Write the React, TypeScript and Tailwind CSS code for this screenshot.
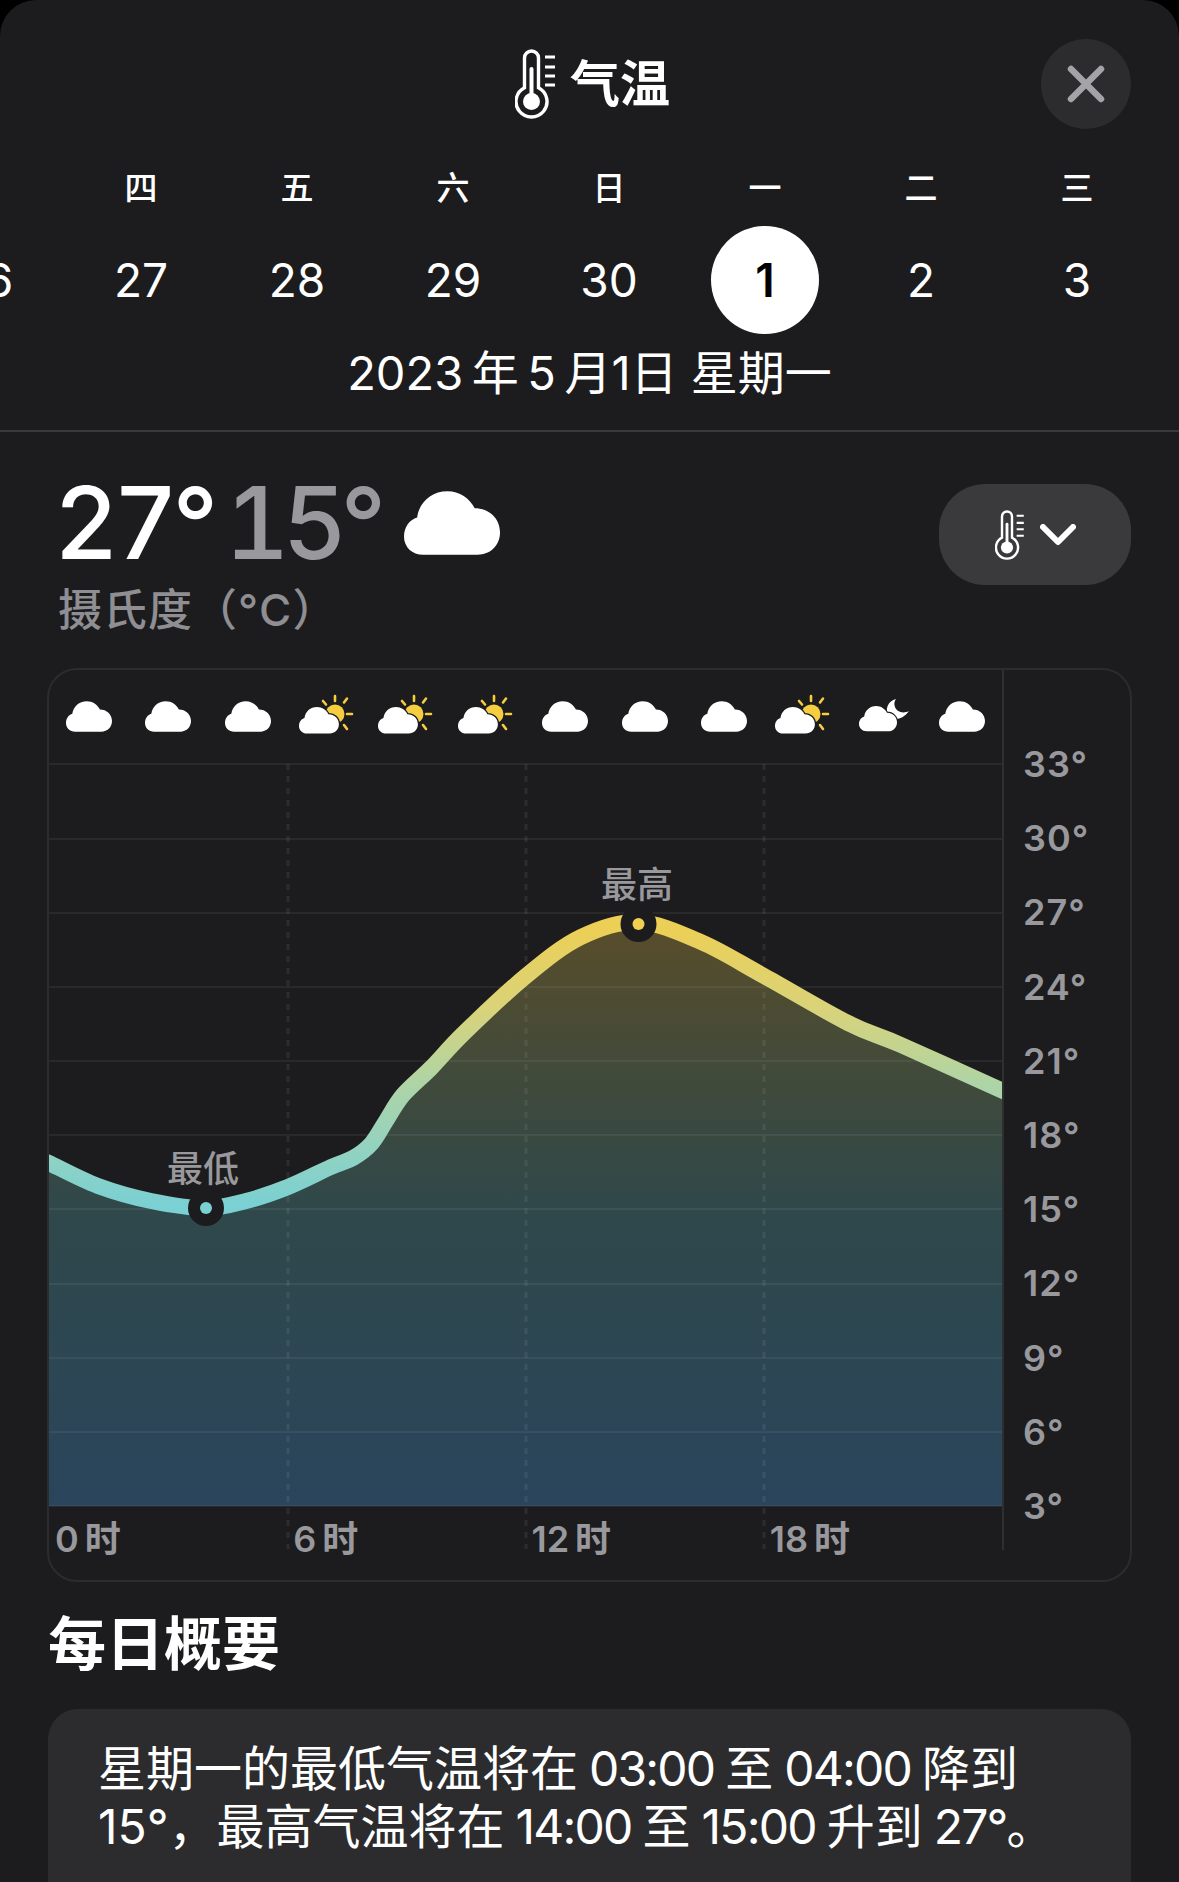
const curve: [number, number][] = [
  [40, 1158], [48, 1162], [97, 1185], [150, 1200], [205, 1207], [245, 1200], [287, 1186],
  [330, 1166], [352, 1157], [370, 1143], [385, 1120], [402, 1094], [430, 1067], [463, 1032],
  [525, 975], [580, 936], [637, 921], [700, 941], [763, 975],
  [847, 1022], [900, 1044], [1002, 1090], [1010, 1094],
];

// catmull-rom through the sampled points
function smooth(points: [number, number][]) {
  let d = `M${points[0][0]} ${points[0][1]}`;
  for (let i = 0; i < points.length - 1; i++) {
    const p0 = points[Math.max(i - 1, 0)];
    const p1 = points[i];
    const p2 = points[i + 1];
    const p3 = points[Math.min(i + 2, points.length - 1)];
    const c1x = p1[0] + (p2[0] - p0[0]) / 6;
    const c1y = p1[1] + (p2[1] - p0[1]) / 6;
    const c2x = p2[0] - (p3[0] - p1[0]) / 6;
    const c2y = p2[1] - (p3[1] - p1[1]) / 6;
    d += ` C${c1x.toFixed(1)} ${c1y.toFixed(1)} ${c2x.toFixed(1)} ${c2y.toFixed(1)} ${p2[0]} ${p2[1]}`;
  }
  return d;
}

const line = smooth(curve);
const area = `${line} L1010 1505 L40 1505 Z`;
const gridY = [763, 838, 912, 986, 1060, 1134, 1208, 1283, 1357, 1431, 1505];
const dashX = [287, 525, 763];

const weekdays = ["", "四", "五", "六", "日", "一", "二", "三"];
const dates = ["26", "27", "28", "29", "30", "1", "2", "3"];
const yLabels = ["33°", "30°", "27°", "24°", "21°", "18°", "15°", "12°", "9°", "6°", "3°"];
const xLabels = ["0\u2009时", "6\u2009时", "12\u2009时", "18\u2009时"];
const hourly = ["cloud", "cloud", "cloud", "sun", "sun", "sun", "cloud", "cloud", "cloud", "sun", "moon", "cloud"];

const CLOUD = "M19 63C8 63 0 55 0 45C0 35 6 28 13 26C15 11 27 0 43 0C55 0 65 7 70 17C84 17 95 27 95 41C95 54 85 63 73 63Z";

function Thermometer({ className }: { className: string }) {
  return (
    <svg viewBox="0 0 40 70" className={className} fill="none" stroke="white" strokeLinecap="round">
      <path d="M9.5 38.7V9a7 7 0 0 1 14 0V38.7a15.5 15.5 0 1 1 -14 0Z" strokeWidth="3.4" />
      <path d="M16.5 20V52" strokeWidth="4" />
      <circle cx="16.5" cy="52.5" r="8.5" fill="white" stroke="none" />
      <path d="M30 8H40M30 18H40M30 27H40M30 36H40" strokeWidth="3" strokeLinecap="butt" />
    </svg>
  );
}

function HourIcon({ kind }: { kind: string }) {
  if (kind === "cloud") {
    return (
      <svg viewBox="0 0 95 63" className="w-[46px] h-[31px] mt-[4px]" fill="white">
        <path d={CLOUD} />
      </svg>
    );
  }
  if (kind === "sun") {
    return (
      <svg viewBox="0 0 56 40" className="w-[56px] h-[40px]">
        <circle cx="36" cy="20" r="9.5" fill="#f6cd3f" />
        <g stroke="#f6cd3f" strokeWidth="2.6" strokeLinecap="round">
          <path d="M36 2V7M24 7L27 10.5M48 4.5L45 8.5M48 20H53M45 31L48 35" />
        </g>
        <g transform="translate(0 13) scale(0.42)">
          <path d={CLOUD} fill="white" stroke="#1c1c1e" strokeWidth="6" paintOrder="stroke" />
        </g>
      </svg>
    );
  }
  return (
    <svg viewBox="0 0 52 36" className="w-[52px] h-[36px] ml-[5px] mt-[3px]">
      <path d="M37 1C29 3 26 11 29 17C32 22 42 24 50 13C44 16 38 14 36 9C35 6 35 4 37 1Z" fill="white" />
      <g transform="translate(0 8) scale(0.4)">
        <path d={CLOUD} fill="white" stroke="#1c1c1e" strokeWidth="6" paintOrder="stroke" />
      </g>
    </svg>
  );
}

function Num({ children }: { children: string }) {
  return <span className="tracking-[-1.8px]">{children}</span>;
}

export default function App() {
  return (
    <div className="w-[1179px] h-[1882px] bg-black overflow-hidden font-['Inter','Noto_Sans_CJK_SC',sans-serif] text-white">
      <div className="h-full rounded-t-[36px] bg-[#1c1c1e] flex flex-col">
        <header className="relative flex items-center justify-center gap-[15px] h-[90px] mt-[39px] pl-[6px]">
          <Thermometer className="w-[40px] h-[70px]" />
          <h1 className="text-[50px] leading-none font-semibold">气温</h1>
          <button className="absolute right-[48px] top-0 w-[90px] h-[90px] rounded-full bg-[#2c2c2e] flex items-center justify-center">
            <svg viewBox="0 0 38 38" className="w-[38px] h-[38px]" fill="none" stroke="#a3a3a8" strokeWidth="6.5" strokeLinecap="round">
              <path d="M4 4L34 34M34 4L4 34" />
            </svg>
          </button>
        </header>

        <div className="flex ml-[-93px] mt-[40px] h-[38px] items-center">
          {weekdays.map((d, i) => (
            <div key={i} className="w-[156px] shrink-0 text-center text-[33px] leading-none font-medium">
              {d}
            </div>
          ))}
        </div>

        <div className="flex ml-[-93px] mt-[19px] h-[108px] items-center">
          {dates.map((d) => (
            <div key={d} className="w-[156px] shrink-0 flex justify-center">
              {d === "1" ? (
                <div className="w-[108px] h-[108px] rounded-full bg-white text-black flex items-center justify-center text-[46px] font-semibold">
                  {d}
                </div>
              ) : (
                <span className="text-[46px] leading-none">{d}</span>
              )}
            </div>
          ))}
        </div>

        <div className="h-[64px] mt-[6px] flex items-center justify-center text-[47px] leading-none whitespace-nowrap">
          2023{"\u2009"}年{"\u2009"}5{"\u2009"}月1日 星期一
        </div>

        <div className="h-[2px] mt-[26px] bg-[#3a3a3c] mb-[51px]" />

        <div className="flex justify-between pl-[54px] pr-[48px] h-[185px]">
          <div className="mt-[-10px]">
            <div className="flex items-center h-[100px] text-[100px] leading-none font-medium tabular-nums">
              <span className="tracking-[-5.5px]">27°</span>
              <span className="ml-[12px] tracking-[-7px] text-[#98989d]">15°</span>
              <svg viewBox="0 0 95 63" className="w-[96px] h-[64px] ml-[25px]" fill="white">
                <path d={CLOUD} />
              </svg>
            </div>
            <div className="mt-[13px] ml-[4px] text-[44px] leading-[48px] text-[#8e8e93] font-medium whitespace-nowrap tracking-[1px]">摄氏度（°C）</div>
          </div>
          <button className="w-[192px] h-[101px] mt-[1px] rounded-[46px] bg-[#3a3a3c] flex items-center justify-center gap-[16px]">
            <Thermometer className="w-[29px] h-[50px]" />
            <svg viewBox="0 0 36 22" className="w-[36px] h-[22px]" fill="none" stroke="white" strokeWidth="6" strokeLinecap="round" strokeLinejoin="round">
              <path d="M3 3L18 18L33 3" />
            </svg>
          </button>
        </div>

        <section className="relative flex ml-[47px] w-[1085px] h-[914px] rounded-[30px] border-2 border-[#2c2c2e]">
          <div className="w-[955px] h-[880px] border-r-2 border-[#2f2f31] shrink-0 flex flex-col">
            <div className="grid grid-cols-12 h-[92px] shrink-0 items-center justify-items-center pb-[4px]">
              {hourly.map((kind, i) => (
                <HourIcon key={i} kind={kind} />
              ))}
            </div>
            <svg viewBox="48 761 953 788" className="w-[953px] h-[788px] shrink-0">
              <defs>
                <linearGradient id="stroke" gradientUnits="userSpaceOnUse" x1="0" y1="925" x2="0" y2="1205">
                  <stop offset="0" stopColor="#eccf55" />
                  <stop offset="0.3" stopColor="#d9d37a" />
                  <stop offset="0.55" stopColor="#b0d4a4" />
                  <stop offset="0.75" stopColor="#98d3bc" />
                  <stop offset="1" stopColor="#7ad0d3" />
                </linearGradient>
                <linearGradient id="fill" gradientUnits="userSpaceOnUse" x1="0" y1="925" x2="0" y2="1505">
                  <stop offset="0" stopColor="#584d2a" />
                  <stop offset="0.28" stopColor="#3f4a3c" />
                  <stop offset="0.5" stopColor="#2f484b" />
                  <stop offset="1" stopColor="#2a455c" />
                </linearGradient>
              </defs>
              <path d={area} fill="url(#fill)" />
              {gridY.map((y) => (
                <line key={y} x1="48" x2="1002" y1={y} y2={y} stroke="white" strokeOpacity="0.06" strokeWidth="2" />
              ))}
              {dashX.map((x) => (
                <line key={x} x1={x} x2={x} y1="763" y2="1548" stroke="white" strokeOpacity="0.07" strokeWidth="3" strokeDasharray="6 6" />
              ))}
              <path d={line} fill="none" stroke="url(#stroke)" strokeWidth="16" />
              <circle cx="205" cy="1207" r="18" fill="#1c1c1e" />
              <circle cx="205" cy="1207" r="6" fill="#7ad0d3" />
              <circle cx="637.5" cy="923" r="18" fill="#1c1c1e" />
              <circle cx="637.5" cy="923" r="6" fill="#f0cf52" />
            </svg>
            <div className="grid grid-cols-4 mt-[-36px] h-[36px] text-[36px] leading-[36px] font-semibold text-[#98989d]">
              {xLabels.map((l) => (
                <span key={l} className="pl-[6px] whitespace-nowrap mt-[7px]">
                  {l}
                </span>
              ))}
            </div>
          </div>
          <div className="flex flex-col pt-[57px] pl-[19px]">
            {yLabels.map((l) => (
              <div key={l} className="h-[74.2px] shrink-0 flex items-center text-[36px] font-semibold tracking-[1px] text-[#98989d]">
                {l}
              </div>
            ))}
          </div>
          <span className="absolute left-[118px] top-[479px] text-[36px] leading-[40px] font-medium text-[#98989d]">最低</span>
          <span className="absolute left-[552px] top-[195px] text-[36px] leading-[40px] font-medium text-[#98989d]">最高</span>
        </section>

        <h2 className="ml-[48px] mt-[29px] text-[58px] leading-[66px] font-semibold">每日概要</h2>

        <div className="ml-[48px] mt-[32px] w-[1083px] flex-1 rounded-t-[30px] bg-[#2c2c2e] pl-[50px] pt-[31px] text-[48px] leading-[58px] whitespace-nowrap [word-spacing:-2.5px]">
          <div>
            星期一的最低气温将在 <Num>03:00</Num> 至 <Num>04:00</Num> 降到
          </div>
          <div>
            15°，最高气温将在 <Num>14:00</Num> 至 <Num>15:00</Num> 升到 <Num>27°</Num>。
          </div>
        </div>
      </div>
    </div>
  );
}
